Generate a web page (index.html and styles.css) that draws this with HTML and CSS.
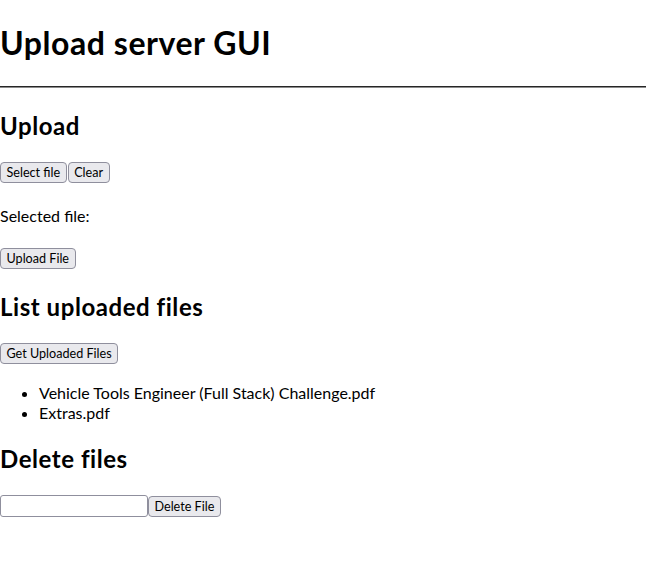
FILE: index.html
```html
<!DOCTYPE html>
<html lang="en">
<head>
<meta charset="utf-8">
<title>Upload server GUI</title>
<link rel="stylesheet" href="styles.css">
</head>
<body>
<h1 class="title">Upload server GUI</h1>
<hr class="rule">

<h2 class="section upload-head">Upload</h2>
<div class="btn-row first-row">
  <button class="btn">Select file</button>
  <button class="btn">Clear</button>
</div>
<p class="selected">Selected file:</p>
<div class="btn-row upload-row">
  <button class="btn">Upload File</button>
</div>

<h2 class="section list-head">List uploaded files</h2>
<div class="btn-row get-row">
  <button class="btn">Get Uploaded Files</button>
</div>
<ul class="files">
  <li>Vehicle Tools Engineer (Full Stack) Challenge.pdf</li>
  <li>Extras.pdf</li>
</ul>

<h2 class="section delete-head">Delete files</h2>
<div class="btn-row delete-row">
  <input class="field" type="text">
  <button class="btn">Delete File</button>
</div>
</body>
</html>
```
FILE: styles.css
```css
html, body {
  background: #ffffff;
}
body {
  margin: 0;
  font-family: "Lato", "Open Sans", sans-serif;
  font-size: 16px;
  color: #000;
}
.title {
  font-size: 32px;
  line-height: 42px;
  font-weight: 700;
  letter-spacing: 0.55px;
  margin: 21.5px 0 22.5px;
}
.rule {
  margin: 0;
  border: 0;
  border-top: 1px solid #262626;
  border-bottom: 1px solid #8c8c8c;
  height: 0;
}
.section {
  font-size: 24px;
  line-height: 32px;
  font-weight: 700;
  letter-spacing: 0.55px;
  margin: 0;
}
.upload-head { margin-top: 21.7px; }
.list-head { margin-top: 21.7px; }
.delete-head { margin-top: 19.9px; }

.btn-row {
  display: flex;
  align-items: flex-start;
  gap: 1px;
}
.first-row { margin-top: 20.3px; }
.upload-row { margin-top: 21.7px; }
.get-row { margin-top: 20.3px; }
.delete-row { margin-top: 20.3px; gap: 0; }

.btn {
  font-family: "Lato", "Open Sans", sans-serif;
  font-size: 12.6px;
  line-height: 15px;
  height: 21px;
  padding: 2px 5.5px;
  margin: 0;
  color: #000;
  background: #e9e9ed;
  border: 1px solid #8f8f9d;
  border-radius: 4px;
  box-sizing: border-box;
}
.delete-row .btn { margin-top: 1px; }

.selected {
  margin: 22.3px 0 0;
  line-height: 21px;
}
.files {
  margin: 18.8px 0 0;
  padding-left: 39px;
  line-height: 20px;
}
.field {
  width: 148px;
  height: 22px;
  box-sizing: border-box;
  margin: 0;
  padding: 2px 4px;
  border: 1px solid #8f8f9d;
  border-radius: 3px;
  background: #fff;
  font-family: "Lato", "Open Sans", sans-serif;
  font-size: 13px;
}
```
